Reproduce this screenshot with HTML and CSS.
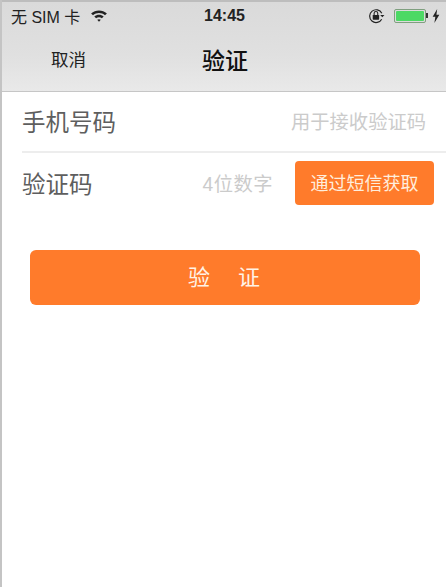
FILE: index.html
```html
<!DOCTYPE html>
<html lang="zh">
<head>
<meta charset="utf-8">
<title>验证</title>
<link rel="stylesheet" href="styles.css">
</head>
<body>
<div class="screen">
  <header class="top">
    <div class="status">
      <div class="status-left">
        <span>无 SIM 卡</span>
        <svg class="wifi" width="18" height="13" viewBox="0 0 17 13"><path d="M.6 4.400C5 .4 12 .4 16.400 4.400L14.500 6.300C11.100 3.300 5.900 3.300 2.500 6.300Z" fill="#222"/><path d="M3.800 7.500C6.500 5.200 10.500 5.200 13.200 7.500L11.400 9.300C9.700 8 7.300 8 5.600 9.300Z" fill="#222"/><path d="M8.500 12.800 6.700 10.800C7.800 10.100 9.200 10.100 10.300 10.800Z" fill="#222"/></svg>
      </div>
      <div class="status-time">14:45</div>
      <div class="status-right">
        <svg class="lock" width="20" height="16" viewBox="0 0 18 15"><path d="M13.400 10.500A6 6 0 1 1 13.500 5" fill="none" stroke="#222" stroke-width="1.100"/><path d="M12 6.500h4l-2 2.200Z" fill="#222"/><rect x="5" y="6.500" width="6" height="4.500" rx=".6" fill="#222"/><path d="M6.300 6.500V5a1.700 1.700 0 0 1 3.400 0v1.500" fill="none" stroke="#222" stroke-width="1"/></svg>
        <div class="battery"><div class="battery-fill"></div></div>
        <div class="battery-tip"></div>
        <svg class="bolt" width="8" height="14" viewBox="0 0 7 13"><path d="M4.600 0 .4 7.200h2.500L2 13l4.600-7.600H3.900Z" fill="#222"/></svg>
      </div>
    </div>
    <nav class="nav">
      <span class="nav-cancel">取消</span>
      <span class="nav-title">验证</span>
    </nav>
  </header>
  <section class="form">
    <div class="row row-phone">
      <span class="label">手机号码</span>
      <span class="hint">用于接收验证码</span>
    </div>
    <div class="row row-code">
      <span class="label">验证码</span>
      <span class="hint hint-code">4位数字</span>
      <button class="sms">通过短信获取</button>
    </div>
  </section>
  <button class="submit"><span>验</span><span>证</span></button>
</div>
</body>
</html>
```

FILE: styles.css
```css
* { box-sizing: border-box; }
html, body { margin: 0; padding: 0; background: #fff; }
body { font-family: "Liberation Sans", "Noto Sans CJK SC", sans-serif; }
.screen {
  width: 446px;
  height: 587px;
  overflow: hidden;
  border-left: 2px solid #c4c4c4;
  background: #fff;
}
.top {
  margin-left: -2px;
  height: 92px;
  border-top: 2px solid #bdbdbd;
  border-bottom: 1px solid #c6c6c6;
  background: linear-gradient(#dadada, #e0e0e0 60%, #e9e9e9);
}
.status {
  height: 28px;
  padding: 0 6px 1px 11px;
  display: flex;
  align-items: center;
  justify-content: space-between;
  position: relative;
  color: #222;
  font-size: 16px;
}
.status-left { display: flex; align-items: center; gap: 10px; }
.status-time {
  position: absolute;
  left: 204px;
  top: 4px;
  font-size: 16px;
  font-weight: 700;
  line-height: 20px;
}
.status-right { display: flex; align-items: center; }
.lock { margin-right: 7px; }
.battery {
  width: 32px;
  height: 14px;
  padding: 1px;
  border: 1px solid #7f9f7f;
  border-radius: 2px;
}
.battery-fill { height: 100%; background: #4cd964; border-radius: 1px; }
.battery-tip { width: 2px; height: 5px; background: #333; margin-right: 4px; }
.nav {
  height: 59px;
  padding-left: 51px;
  display: flex;
  align-items: center;
  color: #222;
}
.nav-cancel { font-size: 17.500px; margin-top: -2px; }
.nav-title {
  margin-left: 116px;
  margin-top: -2px;
  font-size: 23px;
  font-weight: 500;
  color: #111;
}
.form { margin-left: -2px; }
.row { display: flex; align-items: center; }
.row-phone {
  height: 61px;
  margin-left: 22px;
  padding: 0 20px 2px 0;
  justify-content: space-between;
  border-bottom: 2px solid #ededed;
}
.row-code {
  height: 62px;
  padding: 0 12px 2px 22px;
}
.label { font-size: 23.500px; color: #5e5e5e; }
.hint { font-size: 19.300px; color: #cbcbcb; }
.hint-code { margin-left: auto; margin-right: 22px; letter-spacing: .5px; }
.sms {
  width: 139px;
  height: 44px;
  border: 0;
  border-radius: 4px;
  padding: 0 0 2px;
  background: #ff7b2b;
  color: #ffeedd;
  font: inherit;
  font-size: 18px;
}
.submit {
  display: flex;
  justify-content: center;
  align-items: center;
  gap: 28px;
  width: 390px;
  height: 55px;
  margin: 35px 0 0 28px;
  padding: 0 2px 6px 0;
  border: 0;
  border-radius: 6px;
  background: #ff7b2b;
  color: #fff3e6;
  font: inherit;
  font-size: 22px;
}
```
